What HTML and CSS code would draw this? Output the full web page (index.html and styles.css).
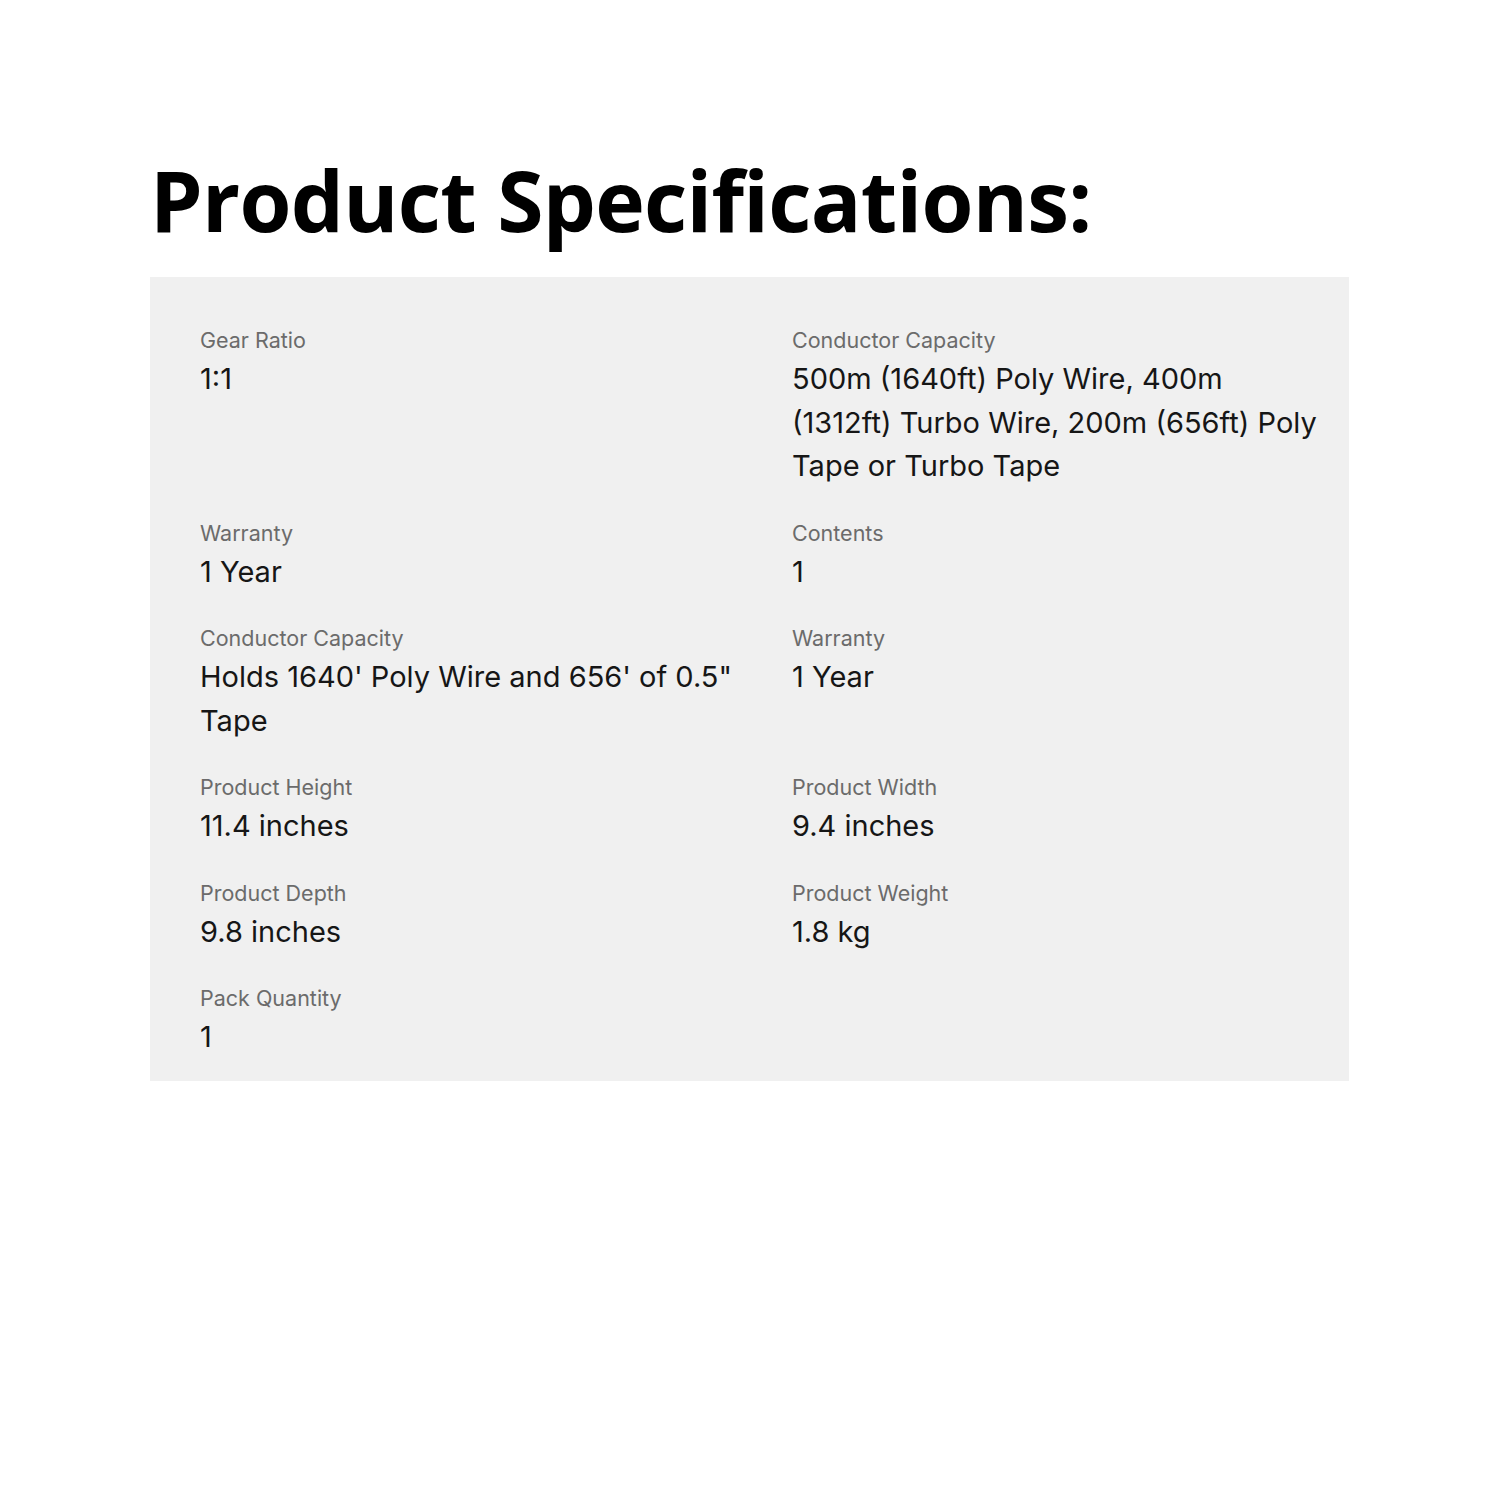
FILE: index.html
```html
<!DOCTYPE html>
<html>
<head>
<meta charset="utf-8">
<link rel="stylesheet" href="styles.css">
</head>
<body>
<main class="page">
  <h1 class="title">Product Specifications:</h1>
  <section class="panel">
    <div class="spec"><div class="label">Gear Ratio</div><div class="value">1:1</div></div>
    <div class="spec"><div class="label">Conductor Capacity</div><div class="value">500m (1640ft) Poly Wire, 400m (1312ft) Turbo Wire, 200m (656ft) Poly Tape or Turbo Tape</div></div>
    <div class="spec"><div class="label">Warranty</div><div class="value">1 Year</div></div>
    <div class="spec"><div class="label">Contents</div><div class="value">1</div></div>
    <div class="spec"><div class="label">Conductor Capacity</div><div class="value">Holds 1640' Poly Wire and 656' of 0.5" Tape</div></div>
    <div class="spec"><div class="label">Warranty</div><div class="value">1 Year</div></div>
    <div class="spec"><div class="label">Product Height</div><div class="value">11.4 inches</div></div>
    <div class="spec"><div class="label">Product Width</div><div class="value">9.4 inches</div></div>
    <div class="spec"><div class="label">Product Depth</div><div class="value">9.8 inches</div></div>
    <div class="spec"><div class="label">Product Weight</div><div class="value">1.8 kg</div></div>
    <div class="spec"><div class="label">Pack Quantity</div><div class="value">1</div></div>
  </section>
</main>
</body>
</html>
```
FILE: styles.css
```css
html, body {
  margin: 0;
  padding: 0;
  background: #ffffff;
}
.page {
  width: 1500px;
  height: 1500px;
  padding: 150px 0 0 150px;
  box-sizing: border-box;
}
.title {
  margin: 0 0 27px 0;
  font-family: "Open Sans", sans-serif;
  font-weight: 700;
  font-size: 84px;
  line-height: 100px;
  color: #000;
  letter-spacing: -0.7px;
}
.panel {
  width: 1199px;
  background: #f0f0f0;
  box-sizing: border-box;
  padding: 50px 12px 22px 50px;
  display: grid;
  grid-template-columns: 560px 534px;
  column-gap: 32px;
  row-gap: 32px;
}
.label {
  font-family: "Inter", "Roboto", sans-serif;
  font-size: 21.5px;
  line-height: 26px;
  color: #6b6b6b;
  margin-bottom: 4px;
}
.value {
  font-family: "Inter", "Roboto", sans-serif;
  font-size: 29px;
  line-height: 43.5px;
  color: #161616;
}
```
